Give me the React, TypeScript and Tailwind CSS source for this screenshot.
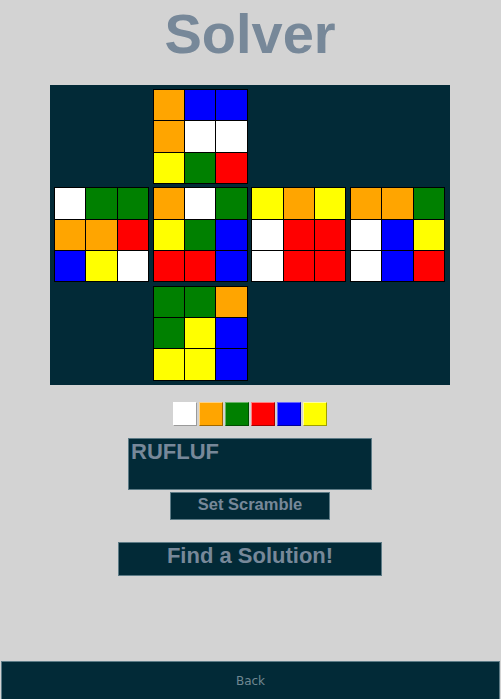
import React, { useState } from "react";

type Face = string[][];

const W = "#ffffff";
const O = "#ffa500";
const G = "#008000";
const R = "#ff0000";
const B = "#0000ff";
const Y = "#ffff00";

const faces: Record<string, Face> = {
  up: [
    [O, B, B],
    [O, W, W],
    [Y, G, R],
  ],
  left: [
    [W, G, G],
    [O, O, R],
    [B, Y, W],
  ],
  front: [
    [O, W, G],
    [Y, G, B],
    [R, R, B],
  ],
  right: [
    [Y, O, Y],
    [W, R, R],
    [W, R, R],
  ],
  back: [
    [O, O, G],
    [W, B, Y],
    [W, B, R],
  ],
  down: [
    [G, G, O],
    [G, Y, B],
    [Y, Y, B],
  ],
};

const swatches = [
  { c: W, light: "#ffffff", dark: "#9a9a9a" },
  { c: O, light: "#ffd27f", dark: "#a06800" },
  { c: G, light: "#66b366", dark: "#004d00" },
  { c: R, light: "#ff8080", dark: "#a00000" },
  { c: B, light: "#6666ff", dark: "#00009a" },
  { c: Y, light: "#ffff99", dark: "#a0a000" },
];

const FaceGrid: React.FC<{ face: Face }> = ({ face }) => (
  <div className="grid grid-cols-3 grid-rows-3 gap-px bg-black p-px w-[95px] h-[95px]">
    {face.flat().map((color, i) => (
      <div key={i} style={{ backgroundColor: color }} />
    ))}
  </div>
);

const App: React.FC = () => {
  const [scramble, setScramble] = useState("RUFLUF");

  return (
    <div
      className="h-screen overflow-hidden bg-[#d3d3d3] pr-[1px] flex flex-col items-center text-[#778899]"
      style={{ fontFamily: '"Liberation Sans", Arial, sans-serif' }}
    >
      <h1 className="mt-[6px] text-[56px] leading-[56px] font-bold">Solver</h1>

      <div className="mt-[23px] w-[400px] h-[300px] bg-[#022a37] pl-[4px] pt-[4px] grid grid-cols-[95px_95px_95px_95px] grid-rows-[95px_95px_95px] gap-x-[3.7px] gap-y-[3.3px]">
        <div />
        <FaceGrid face={faces.up} />
        <div />
        <div />
        <FaceGrid face={faces.left} />
        <FaceGrid face={faces.front} />
        <FaceGrid face={faces.right} />
        <FaceGrid face={faces.back} />
        <div />
        <FaceGrid face={faces.down} />
      </div>

      <div className="mt-[17px] flex gap-[2px]">
        {swatches.map((s) => (
          <button
            key={s.c}
            className="w-[24px] h-[24px] border"
            style={{
              backgroundColor: s.c,
              borderTopColor: s.light,
              borderLeftColor: s.light,
              borderBottomColor: s.dark,
              borderRightColor: s.dark,
            }}
          />
        ))}
      </div>

      <textarea
        value={scramble}
        onChange={(e) => setScramble(e.target.value)}
        className="mt-[12px] w-[244px] h-[52px] bg-[#022a37] border border-[#5d7b86] px-[2px] py-0 text-[22px] leading-[26px] font-bold text-[#778899] resize-none outline-none"
      />

      <button className="mt-[2px] w-[160px] h-[28px] pt-[3px] flex items-start justify-center bg-[#022a37] border border-[#5d7b86] text-[16.5px] leading-[16.5px] font-bold">
        Set Scramble
      </button>

      <button className="mt-[22px] w-[264px] h-[34px] pt-[2px] flex items-start justify-center bg-[#022a37] border border-[#5d7b86] text-[22px] leading-[22px] font-bold">
        Find a Solution!
      </button>

      <button
        className="mt-auto mb-[-2px] self-start ml-[1px] w-[499px] h-[40px] bg-[#022a37] border border-[#5d7b86] text-[12px] text-[#6f8791]"
        style={{ fontFamily: '"DejaVu Sans", sans-serif' }}
      >
        Back
      </button>
    </div>
  );
};

export default App;
